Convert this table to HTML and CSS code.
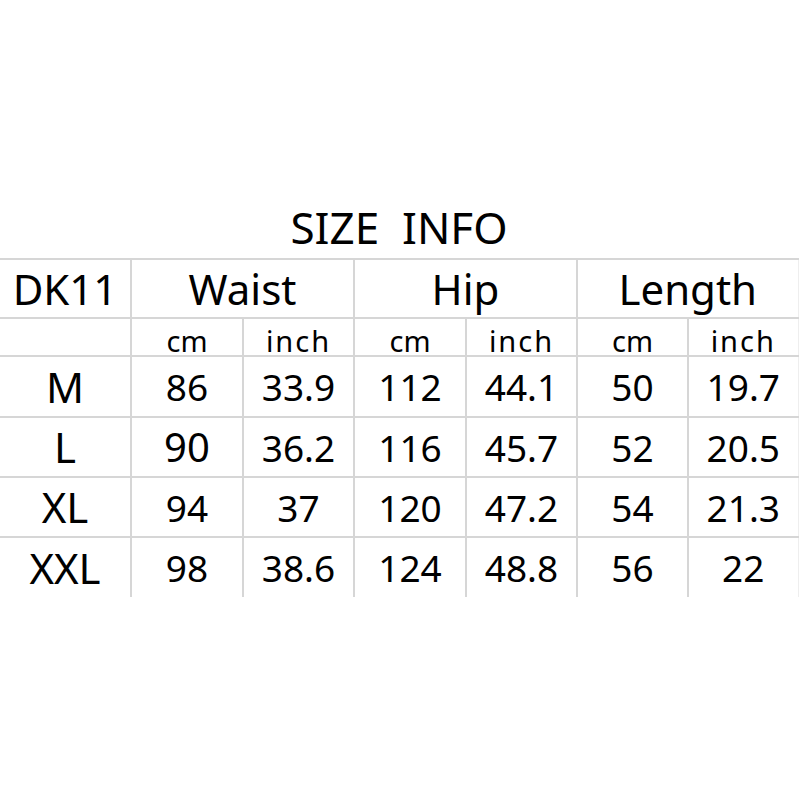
FILE: index.html
```html
<!DOCTYPE html>
<html>
<head>
<meta charset="utf-8">
<link rel="stylesheet" href="styles.css">
</head>
<body>
<div class="page">
  <div class="title">SIZE  INFO</div>
  <table class="chart">
    <colgroup>
      <col class="c-first"><col class="c-a"><col class="c-b"><col class="c-a"><col class="c-b"><col class="c-b"><col class="c-last">
    </colgroup>
    <tr class="head">
      <td class="first">DK11</td>
      <td colspan="2">Waist</td>
      <td colspan="2">Hip</td>
      <td colspan="2" class="last">Length</td>
    </tr>
    <tr class="units">
      <td class="first"></td>
      <td>cm</td><td class="inch">inch</td>
      <td>cm</td><td class="inch">inch</td>
      <td>cm</td><td class="inch last">inch</td>
    </tr>
    <tr class="row r1">
      <td class="first size">M</td><td>86</td><td>33.9</td><td>112</td><td>44.1</td><td>50</td><td class="last">19.7</td>
    </tr>
    <tr class="row r2">
      <td class="first size">L</td><td class="big">90</td><td>36.2</td><td>116</td><td>45.7</td><td>52</td><td class="last">20.5</td>
    </tr>
    <tr class="row r3">
      <td class="first size">XL</td><td>94</td><td>37</td><td>120</td><td>47.2</td><td>54</td><td class="last">21.3</td>
    </tr>
    <tr class="row r4">
      <td class="first size">XXL</td><td>98</td><td>38.6</td><td>124</td><td>48.8</td><td>56</td><td class="last">22</td>
    </tr>
  </table>
</div>
</body>
</html>
```

FILE: styles.css
```css
html, body {
  margin: 0;
  padding: 0;
  background: #ffffff;
}

.page {
  width: 800px;
  height: 800px;
  padding-top: 200px;
  box-sizing: border-box;
  font-family: "Noto Sans", "Open Sans", sans-serif;
  color: #000;
}

.title {
  width: 798px;
  text-align: center;
  font-size: 44px;
  line-height: 54px;
  height: 58px;
  white-space: pre;
}

.chart {
  width: 798px;
  border-collapse: collapse;
  table-layout: fixed;
}

.c-first { width: 131px; }
.c-a { width: 112px; }
.c-b { width: 111px; }
.c-last { width: 110px; }

.chart td {
  padding: 0;
  text-align: center;
  vertical-align: middle;
  border-left: 2px solid #d6d6d6;
  border-bottom: 2px solid #d6d6d6;
  line-height: 1;
}

.chart td.first {
  border-left: none;
}

.chart td.last {
  border-right: 1px solid #eeeeee;
}

.head td {
  border-top: 2px solid #d6d6d6;
  height: 57px;
  font-size: 42px;
}

.units td {
  height: 38px;
  font-size: 29px;
  padding-top: 6px;
  box-sizing: border-box;
  font-family: "Noto Sans", sans-serif;
}

.units td.inch {
  letter-spacing: 2px;
}

.row td {
  font-size: 37px;
}

.row td.size {
  font-size: 42px;
}

.row td.big {
  font-size: 40px;
}

.r1 td { height: 59px; }
.r2 td { height: 58px; }
.r3 td { height: 58px; }
.r4 td { height: 59px; border-bottom: none; }
```
